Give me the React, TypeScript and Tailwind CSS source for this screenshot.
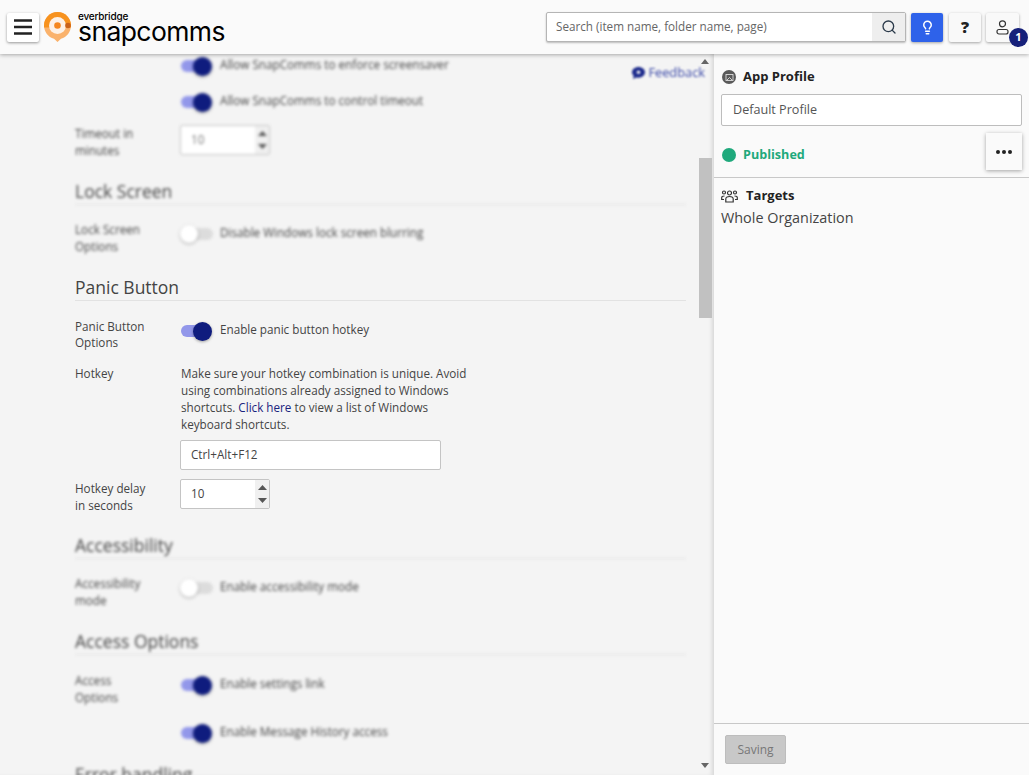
import React from "react";
import { Search, Lightbulb } from "lucide-react";

const font = "font-['Open_Sans',sans-serif]";

function Toggle({ on }: { on: boolean }) {
  return on ? (
    <span className="relative block w-[33px] h-[20px] shrink-0">
      <span className="absolute left-px top-[4px] w-[26px] h-[12px] rounded-full bg-[#9297ea]" />
      <span className="absolute left-[13px] top-[0.500px] w-[19px] h-[19px] rounded-full bg-[#0f1c7e] shadow-[0_1px_3px_rgba(0,0,0,0.35)]" />
    </span>
  ) : (
    <span className="relative block w-[33px] h-[20px] shrink-0">
      <span className="absolute left-[8px] top-[4px] w-[25px] h-[12px] rounded-full bg-[#dcdcdc]" />
      <span className="absolute left-0 top-[1px] w-[18px] h-[18px] rounded-full bg-white shadow-[0_1px_3px_rgba(0,0,0,0.3)]" />
    </span>
  );
}

function SwitchLine({ on, text, className = "" }: { on: boolean; text: string; className?: string }) {
  return (
    <div className={`flex items-center gap-[7px] h-[20px] ${className}`}>
      <Toggle on={on} />
      <span className="relative top-[-1px]">{text}</span>
    </div>
  );
}

function Label({ children }: { children: React.ReactNode }) {
  return <div className="w-[105px] shrink-0 leading-[17px]">{children}</div>;
}

function Heading({ children, className = "" }: { children: React.ReactNode; className?: string }) {
  return (
    <div className={`border-b border-[#e2e2e2] text-[17.500px] leading-[25px] text-[#444] ${className}`}>{children}</div>
  );
}

function NumberBox({ blurred }: { blurred?: boolean }) {
  return (
    <div className="flex w-[90px] h-[30px] bg-white border border-[#c4c4c4] rounded-[2px] items-center">
      <span className={`flex-1 pl-[10px] text-[11.700px] ${blurred ? "text-[#777]" : "text-[#444]"}`}>10</span>
      <div className="w-[14px] h-full bg-[#f0f0f0] flex flex-col items-center justify-between py-[5px]">
        <svg width="9" height="5" viewBox="0 0 9 5"><path d="M4.500 0 9 5H0z" fill="#555" /></svg>
        <svg width="9" height="5" viewBox="0 0 9 5"><path d="M4.500 5 9 0H0z" fill="#555" /></svg>
      </div>
    </div>
  );
}

function Logo() {
  return (
    <div className="flex items-center ml-[5px]">
      <svg width="27" height="30" viewBox="0 0 27 30">
        <path d="M13.500 30 10 26.700C4.300 25.200 0 19.900 0 13.500 0 6 6 0 13.500 0S27 6 27 13.500c0 6.400-4.300 11.700-10 13.200z" fill="#fab26c" />
        <path d="M0 13.500C0 6 6 0 13.500 0S27 6 27 13.500v2H0z" fill="#f7921e" />
        <circle cx="13.500" cy="13.500" r="8.500" fill="#fdf1e6" />
        <circle cx="13.500" cy="13.500" r="3.300" fill="#f5871f" />
        <circle cx="24" cy="13.500" r="2.800" fill="#c9621a" />
      </svg>
      <div className="ml-[7px] text-black font-['Inter',sans-serif]">
        <div className="text-[10px] leading-[10px] font-medium h-[10px] tracking-[-0.2px]">everbridge</div>
        <div className="text-[26.500px] leading-[26px] tracking-[-0.6px] mt-[-3px]">snapcomms</div>
      </div>
    </div>
  );
}

function HeaderButton({ children, className = "" }: { children: React.ReactNode; className?: string }) {
  return (
    <div className={`flex items-center justify-center w-[32px] h-[29px] rounded-[2px] shadow-[0_1px_3px_rgba(0,0,0,0.35)] ${className}`}>{children}</div>
  );
}

export default function App() {
  return (
    <div className={`h-[775px] w-[1029px] overflow-hidden flex flex-col bg-[#fafafa] text-[11.700px] text-[#444] ${font}`}>
      <header className="relative z-10 h-[54px] shrink-0 flex items-center pl-[7px] pr-[10px] bg-[#fafafa] shadow-[0_1px_4px_rgba(0,0,0,0.3)]">
        <div className="flex items-center justify-center w-[32px] h-[29px] bg-white shadow-[0_1px_3px_rgba(0,0,0,0.4)] rounded-[2px]">
          <svg width="18" height="16" viewBox="0 0 18 16"><path d="M0 1.500h18M0 8h18M0 14.500h18" stroke="#222" strokeWidth="2.500" /></svg>
        </div>
        <Logo />
        <div className="ml-auto flex items-center w-[360px] h-[30px] bg-white border border-[#b5b5b5] rounded-[2px] shadow-[0_1px_2px_rgba(0,0,0,0.25)]">
          <span className="flex-1 pl-[9px] text-[#666]">Search (item name, folder name, page)</span>
          <div className="w-[33px] h-full flex items-center justify-center bg-[#eeeeee]">
            <Search size={16} strokeWidth={2} className="text-[#2b3a4a]" />
          </div>
        </div>
        <HeaderButton className="ml-[5px] bg-[#2e62ea]">
          <Lightbulb size={15} strokeWidth={2.400} className="text-white" />
        </HeaderButton>
        <HeaderButton className="ml-[6px] bg-[#f9f9f9]">
          <span className="text-[16px] font-extrabold text-[#222]">?</span>
        </HeaderButton>
        <div className="relative ml-[5px]">
          <HeaderButton className="w-[33px] bg-[#f9f9f9]">
            <svg width="13" height="15" viewBox="0 0 13 15" fill="none" stroke="#333" strokeWidth="1.200">
              <circle cx="6.500" cy="3.800" r="3" />
              <rect x="1" y="9.500" width="11" height="4.500" rx="2" />
            </svg>
          </HeaderButton>
          <span className="absolute left-[23px] top-[15px] w-[19px] h-[19px] rounded-full bg-[#16207a] text-white text-[11px] font-bold flex items-center justify-center">1</span>
        </div>
      </header>

      <div className="flex-1 flex min-h-0">
        <main className="relative w-[713px] shrink-0 flex bg-[#f4f4f4] shadow-[inset_-3px_0_4px_-2px_rgba(0,0,0,0.12)] overflow-hidden">
          <div className="w-[686px] shrink-0 pl-[75px]">
            <div className="blur-[1.400px]">
              <div className="pl-[105px] pt-[2px]">
                <SwitchLine on text="Allow SnapComms to enforce screensaver" />
                <SwitchLine on text="Allow SnapComms to control timeout" className="mt-[16px]" />
              </div>
              <div className="flex mt-[13px]">
                <Label>
                  <div>Timeout in<br />minutes</div>
                </Label>
                <NumberBox blurred />
              </div>
              <Heading className="mt-[20px] h-[26px]">Lock Screen</Heading>
              <div className="flex mt-[16px] h-[34px]">
                <Label>Lock Screen<br />Options</Label>
                <SwitchLine on={false} text="Disable Windows lock screen blurring" className="mt-[3px]" />
              </div>
            </div>

            <Heading className="mt-[20px] h-[26px]">Panic Button</Heading>
            <div className="flex mt-[17px] h-[33px]">
              <div className="w-[105px] shrink-0 leading-[16px]">Panic Button<br />Options</div>
              <SwitchLine on text="Enable panic button hotkey" className="mt-[3px]" />
            </div>
            <div className="flex mt-[14px]">
              <Label>Hotkey</Label>
              <div>
                <p className="w-[295px] pl-px leading-[17px]">
                  Make sure your hotkey combination is unique. Avoid using combinations already assigned to Windows shortcuts. <span className="text-[#1a237e]">Click here</span> to view a list of Windows keyboard shortcuts.
                </p>
                <div className="mt-[7px] w-[261px] h-[30px] bg-white border border-[#c4c4c4] rounded-[2px] flex items-center pl-[10px]">Ctrl+Alt+F12</div>
              </div>
            </div>
            <div className="flex mt-[9px]">
              <Label>
                <div className="pt-px">Hotkey delay<br />in seconds</div>
              </Label>
              <NumberBox />
            </div>

            <div className="blur-[1.400px]">
              <Heading className="mt-[19px] h-[26px]">Accessibility</Heading>
              <div className="flex mt-[16px] h-[34px]">
                <Label>Accessibility<br />mode</Label>
                <SwitchLine on={false} text="Enable accessibility mode" className="mt-[3px]" />
              </div>
              <Heading className="mt-[20px] h-[26px]">Access Options</Heading>
              <div className="flex mt-[17px]">
                <Label>Access<br />Options</Label>
                <div>
                  <SwitchLine on text="Enable settings link" className="mt-[3px]" />
                  <SwitchLine on text="Enable Message History access" className="mt-[28px]" />
                </div>
              </div>
              <div className="mt-[19px] text-[17.500px] leading-[25px]">Error handling</div>
            </div>
          </div>

          <div className="absolute left-[699px] top-[104px] w-[13px] h-[160px] bg-[#c1c1c1]" />
          <svg width="8" height="5" viewBox="0 0 8 5" className="absolute left-[701px] top-[5px] blur-[0.500px]"><path d="M4 0 8 5H0z" fill="#666" /></svg>
          <svg width="8" height="5" viewBox="0 0 8 5" className="absolute left-[701px] bottom-[7px] blur-[0.500px]"><path d="M4 5 8 0H0z" fill="#666" /></svg>

          <div className="absolute right-[8px] top-[9px] flex items-center gap-[3px] blur-[0.800px] text-[#3c4aa8] text-[12.800px]">
            <svg width="13" height="12" viewBox="0 0 13 12"><path d="M6.500 0C2.900 0 0 2.300 0 5.300c0 1.400.6 2.600 1.700 3.500L1 12l3.300-1.600c.7.200 1.400.3 2.200.3 3.600 0 6.500-2.400 6.500-5.400S10.100 0 6.500 0z" fill="#1c2a8c" /><circle cx="6.500" cy="5.300" r="1.800" fill="#f3f3f3" /></svg>
            Feedback
          </div>
        </main>

        <aside className="flex-1 flex flex-col bg-[#fafafa] border-l border-[#dddddd]">
          <div className="px-[7px] pt-[14px]">
            <div className="flex items-center h-[18px] pl-px">
              <span className="w-[14px] h-[14px] rounded-full bg-[#5a5a5a] flex items-center justify-center">
                <svg width="9" height="9" viewBox="0 0 9 9" fill="none" stroke="#ddd" strokeWidth="0.900"><rect x="1" y="1.500" width="7" height="6" /><path d="M2 7 4.500 4.500 7 7" /></svg>
              </span>
              <span className="ml-[7px] text-[13px] font-bold text-[#222]">App Profile</span>
            </div>
            <div className="mt-[8px] h-[32px] bg-white border border-[#bdbdbd] rounded-[2px] flex items-center pl-[11px] text-[12.600px] text-[#555]">Default Profile</div>
            <div className="mt-[7px] h-[37px] flex items-center">
              <div className="flex items-center pt-[7px]">
                <span className="ml-px w-[14px] h-[14px] rounded-full bg-[#1fa97c]" />
                <span className="ml-[7px] text-[12.600px] font-bold text-[#1fa97c]">Published</span>
              </div>
              <div className="ml-auto w-[36px] h-[37px] bg-[#fafafa] shadow-[0_1px_4px_rgba(0,0,0,0.35)] flex items-center justify-center gap-[2px]">
                <span className="w-[4px] h-[4px] rounded-full bg-[#222]" />
                <span className="w-[4px] h-[4px] rounded-full bg-[#222]" />
                <span className="w-[4px] h-[4px] rounded-full bg-[#222]" />
              </div>
            </div>
          </div>
          <div className="mt-[7px] border-t border-[#c8c8c8] px-[7px] pt-[9px]">
            <div className="flex items-center h-[18px]">
              <svg width="17" height="13" viewBox="0 0 17 13" fill="none" stroke="#333" strokeWidth="1.200">
                <circle cx="8.500" cy="3" r="2" /><circle cx="3" cy="2.500" r="1.500" /><circle cx="14" cy="2.500" r="1.500" />
                <path d="M4.800 12V9c0-1.500 1.200-2.500 3.700-2.500s3.700 1 3.700 2.500v3zM3 9.500H.7V7.500C.7 6.500 1.700 6 3.500 6M14 9.500h2.300V7.500c0-1-1-1.500-2.800-1.500" />
              </svg>
              <span className="ml-[8px] text-[13px] font-bold text-[#222]">Targets</span>
            </div>
            <div className="mt-px text-[14.400px] leading-[24px] text-[#444]">Whole Organization</div>
          </div>
          <div className="mt-auto h-[52px] border-t border-[#c8c8c8] pl-[11px] pt-[11px]">
            <div className="w-[61px] h-[29px] bg-[#c8c8c8] rounded-[2px] border border-[#bdbdbd] flex items-center justify-center text-[12px] text-[#777]">Saving</div>
          </div>
        </aside>
      </div>
    </div>
  );
}
